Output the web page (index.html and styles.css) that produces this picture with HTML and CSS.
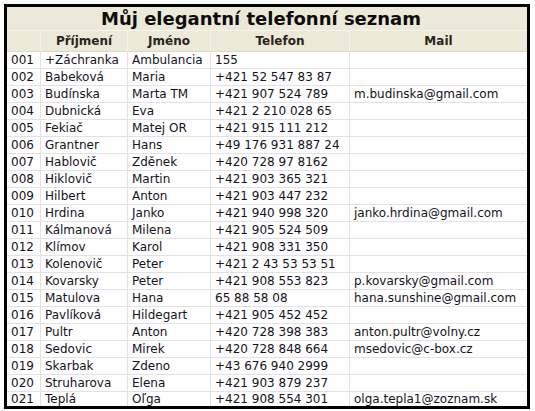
FILE: index.html
```html
<!DOCTYPE html>
<html lang="cs">
<head>
<meta charset="utf-8">
<title>Můj elegantní telefonní seznam</title>
<link rel="stylesheet" href="styles.css">
</head>
<body>
<div class="frame">
<table class="book">
<colgroup>
<col class="c-no"><col class="c-sur"><col class="c-name"><col class="c-tel"><col class="c-mail">
</colgroup>
<thead>
<tr class="title-row"><th colspan="5">Můj elegantní telefonní seznam</th></tr>
<tr class="head-row"><th></th><th>Příjmení</th><th>Jméno</th><th>Telefon</th><th>Mail</th></tr>
</thead>
<tbody>
<tr><td>001</td><td>+Záchranka</td><td>Ambulancia</td><td>155</td><td></td></tr>
<tr><td>002</td><td>Babeková</td><td>Maria</td><td>+421 52 547 83 87</td><td></td></tr>
<tr><td>003</td><td>Budínska</td><td>Marta TM</td><td>+421 907 524 789</td><td>m.budinska@gmail.com</td></tr>
<tr><td>004</td><td>Dubnická</td><td>Eva</td><td>+421 2 210 028 65</td><td></td></tr>
<tr><td>005</td><td>Fekiač</td><td>Matej OR</td><td>+421 915 111 212</td><td></td></tr>
<tr><td>006</td><td>Grantner</td><td>Hans</td><td>+49 176 931 887 24</td><td></td></tr>
<tr><td>007</td><td>Hablovič</td><td>Zděnek</td><td>+420 728 97 8162</td><td></td></tr>
<tr><td>008</td><td>Hiklovič</td><td>Martin</td><td>+421 903 365 321</td><td></td></tr>
<tr><td>009</td><td>Hilbert</td><td>Anton</td><td>+421 903 447 232</td><td></td></tr>
<tr><td>010</td><td>Hrdina</td><td>Janko</td><td>+421 940 998 320</td><td>janko.hrdina@gmail.com</td></tr>
<tr><td>011</td><td>Kálmanová</td><td>Milena</td><td>+421 905 524 509</td><td></td></tr>
<tr><td>012</td><td>Klímov</td><td>Karol</td><td>+421 908 331 350</td><td></td></tr>
<tr><td>013</td><td>Kolenovič</td><td>Peter</td><td>+421 2 43 53 53 51</td><td></td></tr>
<tr><td>014</td><td>Kovarsky</td><td>Peter</td><td>+421 908 553 823</td><td>p.kovarsky@gmail.com</td></tr>
<tr><td>015</td><td>Matulova</td><td>Hana</td><td>65 88 58 08</td><td>hana.sunshine@gmail.com</td></tr>
<tr><td>016</td><td>Pavlíková</td><td>Hildegart</td><td>+421 905 452 452</td><td></td></tr>
<tr><td>017</td><td>Pultr</td><td>Anton</td><td>+420 728 398 383</td><td>anton.pultr@volny.cz</td></tr>
<tr><td>018</td><td>Sedovic</td><td>Mirek</td><td>+420 728 848 664</td><td>msedovic@c-box.cz</td></tr>
<tr><td>019</td><td>Skarbak</td><td>Zdeno</td><td>+43 676 940 2999</td><td></td></tr>
<tr><td>020</td><td>Struharova</td><td>Elena</td><td>+421 903 879 237</td><td></td></tr>
<tr><td>021</td><td>Teplá</td><td>Oľga</td><td>+421 908 554 301</td><td>olga.tepla1@zoznam.sk</td></tr>
</tbody>
</table>
</div>
</body>
</html>
```
FILE: styles.css
```css
html, body {
  margin: 0;
  padding: 0;
  background: #ffffff;
}

body {
  font-family: "DejaVu Sans", Verdana, sans-serif;
  color: #15121c;
}

.frame {
  margin: 4px 0 0 4px;
  width: 520px;
  border: 3px solid #000000;
}

.book {
  width: 520px;
  border-collapse: separate;
  border-spacing: 0;
  table-layout: fixed;
}

.c-no { width: 34px; }
.c-sur { width: 87px; }
.c-name { width: 83px; }
.c-tel { width: 139px; }
.c-mail { width: 177px; }

.book th,
.book td {
  box-sizing: border-box;
  padding: 0 4px;
  white-space: nowrap;
  overflow: hidden;
}

.title-row th {
  height: 23px;
  background: #ece9d8;
  font-size: 18px;
  font-weight: bold;
  line-height: 22px;
  color: #0d0d0d;
  text-align: center;
  border-bottom: 1px solid #f6f5ee;
  padding: 1px 12px 0 0;
}

.head-row th {
  height: 21px;
  background: #ece9d8;
  font-size: 12px;
  font-weight: bold;
  line-height: 19px;
  color: #2a241c;
  text-align: center;
  border-right: 1px solid #f4f2ea;
  border-bottom: 1px solid #dcd8c6;
}

.head-row th:last-child {
  border-right: none;
}

.book td {
  height: 17px;
  font-size: 12px;
  line-height: 16px;
  border-right: 1px solid #e2e2e2;
  border-bottom: 1px solid #e2e2e2;
}

.book td:last-child {
  border-right: none;
}

.book tbody tr:last-child td {
  height: 14px;
  line-height: 14px;
  border-bottom: none;
}
```
